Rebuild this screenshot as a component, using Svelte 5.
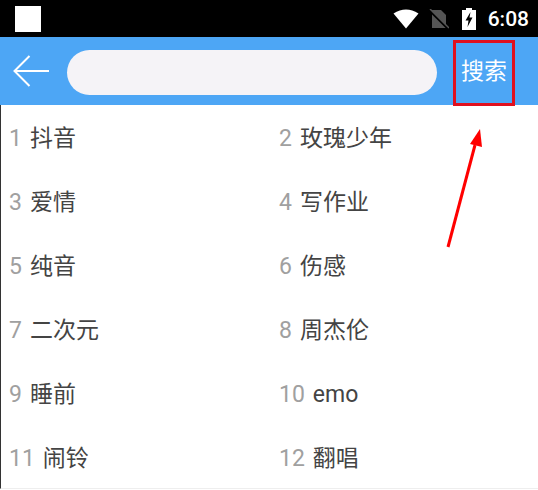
<script>
	const items = ['抖音', '玫瑰少年', '爱情', '写作业', '纯音', '伤感', '二次元', '周杰伦', '睡前', 'emo', '闹铃', '翻唱'];
</script>

<div class="screen">
	<div class="status">
		<div class="square"></div>
		<div class="status-right">
			<svg width="26" height="20" viewBox="0 0 26 20">
				<path d="M0.5 4.5 Q13 -3.5 25.5 4.5 L13 19.5 Z" fill="#fff" />
			</svg>
			<svg width="20" height="20" viewBox="0 0 20 20">
				<path d="M3 1 H12 L17 6 V19 H3 Z" fill="#555" />
				<path d="M0 1 L19 20" stroke="#000" stroke-width="2" />
				<path d="M1 0 L20 19" stroke="#555" stroke-width="1.5" />
			</svg>
			<svg class="battery" width="14" height="22" viewBox="0 0 14 22">
				<path d="M4 0 H10 V2 H14 V22 H0 V2 H4 Z" fill="#fff" />
				<path d="M8.5 4 L3.5 12.5 H6.5 L5.5 19 L10.5 9.5 H7.5 Z" fill="#000" />
			</svg>
			<span class="time">6:08</span>
		</div>
	</div>

	<header class="bar">
		<svg class="back" width="37" height="32" viewBox="0 0 37 32">
			<path d="M36 16 H1.5 M16.5 1 L1.5 16 L16.5 31" fill="none" stroke="#fff" stroke-width="2" />
		</svg>
		<div class="search"></div>
		<span class="action">搜索</span>
	</header>

	<ul class="list">
		{#each items as item, i}
			<li>
				<span class="num">{i + 1}</span>
				<span class="name" class:latin={item === 'emo'}>{item}</span>
			</li>
		{/each}
	</ul>

	<div class="highlight"></div>
	<svg class="arrow" width="40" height="125" viewBox="0 0 40 125">
		<path d="M8 120 L35 18" stroke="#f00" stroke-width="3" fill="none" />
		<path d="M40 2 L30 17 L42 20 Z" fill="#f00" />
	</svg>
</div>

<style>
	:global(body) {
		background: #fff;
	}
	.screen {
		position: relative;
		width: 538px;
		height: 490px;
		overflow: hidden;
		font-family: Roboto, 'Noto Sans CJK SC', sans-serif;
		background: #fff;
	}
	.status {
		height: 37px;
		background: #000;
		display: flex;
		align-items: center;
		justify-content: space-between;
		padding: 0 9px 0 15px;
	}
	.square {
		width: 26px;
		height: 26px;
		background: #fff;
	}
	.status-right {
		display: flex;
		align-items: center;
		gap: 10px;
	}
	.battery {
		margin-left: 3px;
	}
	.time {
		color: #fff;
		font-size: 21px;
		font-weight: 500;
		margin-left: 2px;
	}
	.bar {
		height: 68px;
		background: #4da6f5;
		display: flex;
		align-items: center;
		padding-left: 13px;
	}
	.back {
		flex: none;
	}
	.search {
		width: 370px;
		height: 45px;
		margin-left: 17px;
		margin-top: 2px;
		border-radius: 23px;
		background: #f5f3f7;
	}
	.action {
		margin-left: 24px;
		color: #fff;
		font-size: 23px;
		margin-top: -4px;
	}
	.list {
		list-style: none;
		margin: 0;
		padding: 0;
		display: grid;
		grid-template-columns: 270px 1fr;
		grid-auto-rows: 64px;
		border-left: 1px solid #333;
		border-bottom: 1px solid #eee;
		height: 383px;
	}
	li {
		display: flex;
		align-items: center;
		gap: 8px;
		padding: 0 0 2px 8px;
		font-size: 23px;
	}
	.num {
		color: #a0a0a0;
		padding-top: 4px;
	}
	.name {
		color: #444;
	}
	.latin {
		padding-top: 4px;
	}
	.highlight {
		position: absolute;
		left: 453px;
		top: 40px;
		width: 62px;
		height: 66px;
		box-sizing: border-box;
		border: 3px solid #e0101e;
	}
	.arrow {
		position: absolute;
		left: 440px;
		top: 127px;
		overflow: visible;
	}
</style>
